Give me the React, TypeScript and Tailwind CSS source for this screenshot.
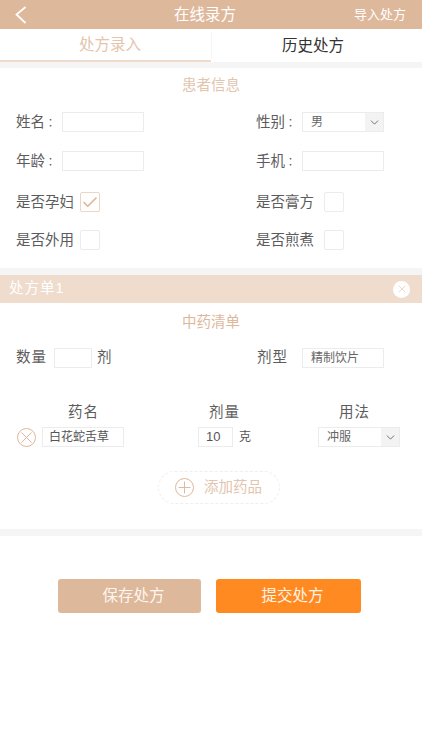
import { ChevronDown, Check, Plus, X } from 'lucide-react'

const FONT = "font-['Liberation_Sans','Noto_Sans_CJK_SC',sans-serif]"

function Label({ text }: { text: string }) {
  return (
    <span className="flex w-[46px] items-center text-[14.5px] leading-5 text-[#5c5c5c]">
      {text}
      <span className="font-['Noto_Sans_CJK_TC',sans-serif] text-[11px]">：</span>
    </span>
  )
}

function Field({ label }: { label: string }) {
  return (
    <div className="flex items-center">
      <Label text={label} />
      <div className="h-5 w-[82px] border border-[#ececec] bg-white" />
    </div>
  )
}

function CheckRow({ label, checked, gap = 'ml-[6px]' }: { label: string; checked?: boolean; gap?: string }) {
  return (
    <div className="flex items-center">
      <span className="text-[14.5px] leading-5 text-[#5c5c5c]">{label}</span>
      <div
        className={`${gap} flex h-5 w-5 items-center justify-center rounded-[2px] border ${
          checked ? 'border-[#ecd5c3]' : 'border-[#ececec]'
        }`}
      >
        {checked && <Check className="h-[19px] w-[19px] text-[#deb89b]" strokeWidth={2.25} />}
      </div>
    </div>
  )
}

function SelectBox({ value, width, arrow }: { value: string; width: string; arrow: string }) {
  return (
    <div className={`flex h-5 ${width} items-center border border-[#ececec] bg-white`}>
      <span className="flex-1 pl-2 text-xs text-[#666]">{value}</span>
      <div className={`flex h-full ${arrow} items-center justify-center bg-[#f3f3f3]`}>
        <ChevronDown className="h-[13px] w-[13px] text-[#555]" strokeWidth={1.5} />
      </div>
    </div>
  )
}

export default function App() {
  return (
    <div className={`${FONT} h-[750px] w-[422px] overflow-hidden bg-white`}>
      {/* Header */}
      <div className="flex h-[29px] items-center bg-[#deb89b] text-white">
        <div className="w-[120px] pl-[15px]">
          <svg width="12" height="18" viewBox="0 0 12 18" fill="none" stroke="currentColor" strokeWidth="1.75">
            <path d="M10.5 1 1.5 8.5 10.5 17" />
          </svg>
        </div>
        <div className="flex-1 text-center text-[15.5px]">在线录方</div>
        <div className="w-[132px] pr-[16px] text-right text-[13px]">导入处方</div>
      </div>

      {/* Tabs */}
      <div className="flex h-[33px]">
        <div className="flex w-[211px] items-center justify-center border-b-2 border-[#f0dccd] pl-[9px] text-[15.5px] text-[#e3c5ae]">
          处方录入
        </div>
        <div className="my-[3px] w-px bg-[#f5f5f5]" />
        <div className="flex flex-1 items-center justify-center pr-[8px] text-[15.5px] text-[#333]">历史处方</div>
      </div>
      <div className="h-[6px] bg-[#f5f5f5]" />

      {/* Patient info */}
      <div className="pt-[7px]">
        <div className="text-center text-[14.5px] leading-5 text-[#e3c5ae]">患者信息</div>
        <div className="mt-[17px] flex flex-col pl-4">
          <div className="grid h-5 grid-cols-[240px_1fr]">
            <Field label="姓名" />
            <div className="flex items-center">
              <Label text="性别" />
              <SelectBox value="男" width="w-[82px]" arrow="w-[18px]" />
            </div>
          </div>
          <div className="mt-[19px] grid h-5 grid-cols-[240px_1fr]">
            <Field label="年龄" />
            <Field label="手机" />
          </div>
          <div className="mt-[21px] grid h-5 grid-cols-[240px_1fr]">
            <CheckRow label="是否孕妇" checked gap="ml-[6px]" />
            <CheckRow label="是否膏方" gap="ml-[10px]" />
          </div>
          <div className="mt-[18px] grid h-5 grid-cols-[240px_1fr]">
            <CheckRow label="是否外用" />
            <CheckRow label="是否煎煮" gap="ml-[10px]" />
          </div>
        </div>
      </div>
      <div className="mt-[18px] h-[7px] bg-[#f5f5f5]" />

      {/* Prescription bar */}
      <div className="flex h-[28px] items-center justify-between bg-[#f0dccd] pl-[9px] pr-[12px] text-white">
        <span className="text-[14.5px] tracking-[1px]">处方单1</span>
        <div className="flex h-[17px] w-[17px] items-center justify-center rounded-full bg-white">
          <X className="h-3 w-3 text-[#ecd9ca]" strokeWidth={2} />
        </div>
      </div>

      {/* Herb list */}
      <div className="pt-[9px]">
        <div className="text-center text-[14.5px] leading-5 text-[#deb89b]">中药清单</div>
        <div className="mt-[15px] grid h-5 grid-cols-[241px_1fr] pl-4">
          <div className="flex items-center text-[14.5px] text-[#5c5c5c]">
            <span className="tracking-[1px]">数量</span>
            <div className="ml-[7px] h-5 w-[38px] border border-[#ececec]" />
            <span className="ml-[5px]">剂</span>
          </div>
          <div className="flex items-center">
            <span className="w-[45px] text-[14.5px] tracking-[1px] text-[#5c5c5c]">剂型</span>
            <div className="flex h-5 w-[82px] items-center border border-[#ececec] pl-2 text-xs text-[#666]">
              精制饮片
            </div>
          </div>
        </div>

        <div className="mt-[35px] grid grid-cols-[17px_82px_1fr_82px] pl-[18px] pr-[22px] text-[14.5px] leading-5 text-[#5c5c5c]">
          <span />
          <span className="ml-[8px] pl-[25px] tracking-[1px]">药名</span>
          <span className="pl-[92px] tracking-[1px]">剂量</span>
          <span className="pl-[21px] tracking-[1px]">用法</span>
        </div>

        <div className="mt-[5px] flex h-5 items-center pl-[17px]">
          <div className="flex h-[19px] w-[19px] items-center justify-center rounded-full border-[1.5px] border-[#deb89b]">
            <X className="h-[19px] w-[19px] shrink-0 text-[#deb89b]" strokeWidth={1.25} />
          </div>
          <div className="ml-[6px] flex h-5 w-[82px] items-center border border-[#ececec] pl-[6px] text-xs text-[#555]">
            白花蛇舌草
          </div>
          <div className="ml-[74px] flex h-5 w-[35px] items-center border border-[#ececec] pl-[7px] text-[13px] text-[#555]">
            10
          </div>
          <span className="ml-[6px] text-xs text-[#555]">克</span>
          <div className="ml-[67px]">
            <SelectBox value="冲服" width="w-[82px]" arrow="w-[18px]" />
          </div>
        </div>

        <div className="ml-[158px] mt-[24px] flex h-[33px] w-[122px] items-center rounded-full border border-dashed border-[#eeeeee] pl-[16px]">
          <div className="flex h-[19px] w-[19px] items-center justify-center rounded-full border-[1.5px] border-[#deb89b]">
            <Plus className="h-[19px] w-[19px] shrink-0 text-[#deb89b]" strokeWidth={1.25} />
          </div>
          <span className="ml-[10px] text-[14.5px] text-[#e3c5ae]">添加药品</span>
        </div>
      </div>
      <div className="mt-[25px] h-[7px] bg-[#f5f5f5]" />

      {/* Actions */}
      <div className="mt-[43px] flex pl-[58px]">
        <button className="h-[34px] w-[143px] rounded-[3px] bg-[#deb89b] pl-[8px] text-[15.5px] text-[#fdf6f0]">
          保存处方
        </button>
        <button className="ml-[15px] h-[34px] w-[145px] rounded-[3px] bg-[#ff8a22] pl-[8px] text-[15.5px] text-[#fff4e8]">
          提交处方
        </button>
      </div>
    </div>
  )
}
